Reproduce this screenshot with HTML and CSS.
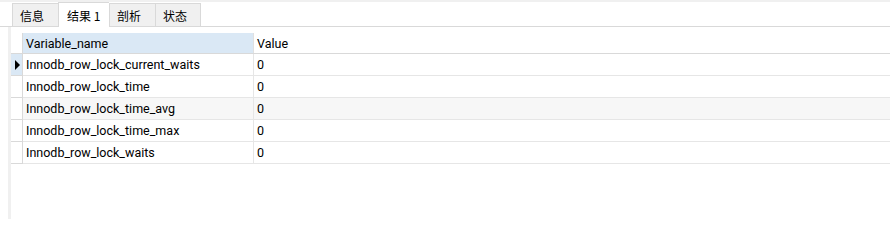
FILE: index.html
```html
<!DOCTYPE html>
<html>
<head>
<meta charset="utf-8">
<link rel="stylesheet" href="styles.css">
</head>
<body>
<div class="topstrip"></div>
<div class="tabbar">
  <div class="tab">信息</div>
  <div class="tab active">结果 1</div>
  <div class="tab">剖析</div>
  <div class="tab">状态</div>
</div>
<div class="main">
  <div class="band"></div>
  <div class="grid">
    <div class="row head">
      <div class="ind"></div>
      <div class="cell c1 sel">Variable_name</div>
      <div class="cell c2">Value</div>
      <div class="fill"></div>
    </div>
    <div class="row">
      <div class="ind cur"><span class="tri"></span></div>
      <div class="cell c1">Innodb_row_lock_current_waits</div>
      <div class="cell c2">0</div>
      <div class="fill"></div>
    </div>
    <div class="row">
      <div class="ind"></div>
      <div class="cell c1">Innodb_row_lock_time</div>
      <div class="cell c2">0</div>
      <div class="fill"></div>
    </div>
    <div class="row alt">
      <div class="ind"></div>
      <div class="cell c1">Innodb_row_lock_time_avg</div>
      <div class="cell c2">0</div>
      <div class="fill"></div>
    </div>
    <div class="row">
      <div class="ind"></div>
      <div class="cell c1">Innodb_row_lock_time_max</div>
      <div class="cell c2">0</div>
      <div class="fill"></div>
    </div>
    <div class="row">
      <div class="ind"></div>
      <div class="cell c1">Innodb_row_lock_waits</div>
      <div class="cell c2">0</div>
      <div class="fill"></div>
    </div>
  </div>
</div>
</body>
</html>
```
FILE: styles.css
```css
html, body {
  margin: 0;
  padding: 0;
  background: #ffffff;
  width: 890px;
  height: 219px;
  overflow: hidden;
}
body {
  font-family: Roboto, "Noto Sans CJK SC", sans-serif;
  color: #000;
}
.topstrip {
  height: 2px;
  background: #f0f0f0;
}
.tabbar {
  display: flex;
  align-items: flex-end;
  padding-left: 12px;
  border-bottom: 1px solid #d9d9d9;
  box-sizing: border-box;
  height: 25px;
}
.tab {
  font-family: "Noto Sans CJK SC", sans-serif;
  font-size: 12px;
  height: 23px;
  box-sizing: border-box;
  border: 1px solid #d9d9d9;
  border-bottom: none;
  border-right: none;
  background: #f0f0f0;
  padding: 0 7px;
  display: flex;
  align-items: center;
  width: 46px;
}
.tab:last-child {
  border-right: 1px solid #d9d9d9;
}
.tab.active {
  background: #fff;
  height: 25px;
  margin-bottom: -1px;
  width: 51px;
  padding-left: 8px;
}
.main {
  display: flex;
  height: 193px;
}
.band {
  width: 3px;
  margin-left: 8px;
  background: #f0f0f0;
}
.grid {
  flex: 1;
  padding-top: 6px;
}
.row {
  display: flex;
  height: 22px;
  border-bottom: 1px solid #e6e6e6;
  box-sizing: border-box;
  font-size: 12.5px;
}
.row.head {
  height: 21px;
  border-bottom: 1px solid #d9d9d9;
}
.row.alt {
  background: #f7f7f7;
}
.ind {
  width: 11px;
  border-right: 1px solid #d9d9d9;
  display: flex;
  align-items: center;
  justify-content: center;
  margin-bottom: -1px;
  border-bottom: 1px solid #d9d9d9;
  background: #fff;
}
.row.head .ind {
  border-bottom: none;
  margin-bottom: 0;
}
.ind.cur {
  background: #dae8f5;
}
.tri {
  width: 0;
  height: 0;
  border-top: 5px solid transparent;
  border-bottom: 5px solid transparent;
  border-left: 5px solid #000;
  margin-left: 1px;
}
.cell {
  display: flex;
  align-items: center;
  padding-left: 3px;
  box-sizing: border-box;
  white-space: nowrap;
}
.c1 {
  width: 231px;
  border-right: 1px solid #e6e6e6;
}
.row.head .c1 {
  border-right: 1px solid #e0e0e0;
}
.c1.sel {
  background: #dae8f5;
}
.c2 {
  width: 120px;
  padding-left: 3px;
}
.fill {
  flex: 1;
}
```
